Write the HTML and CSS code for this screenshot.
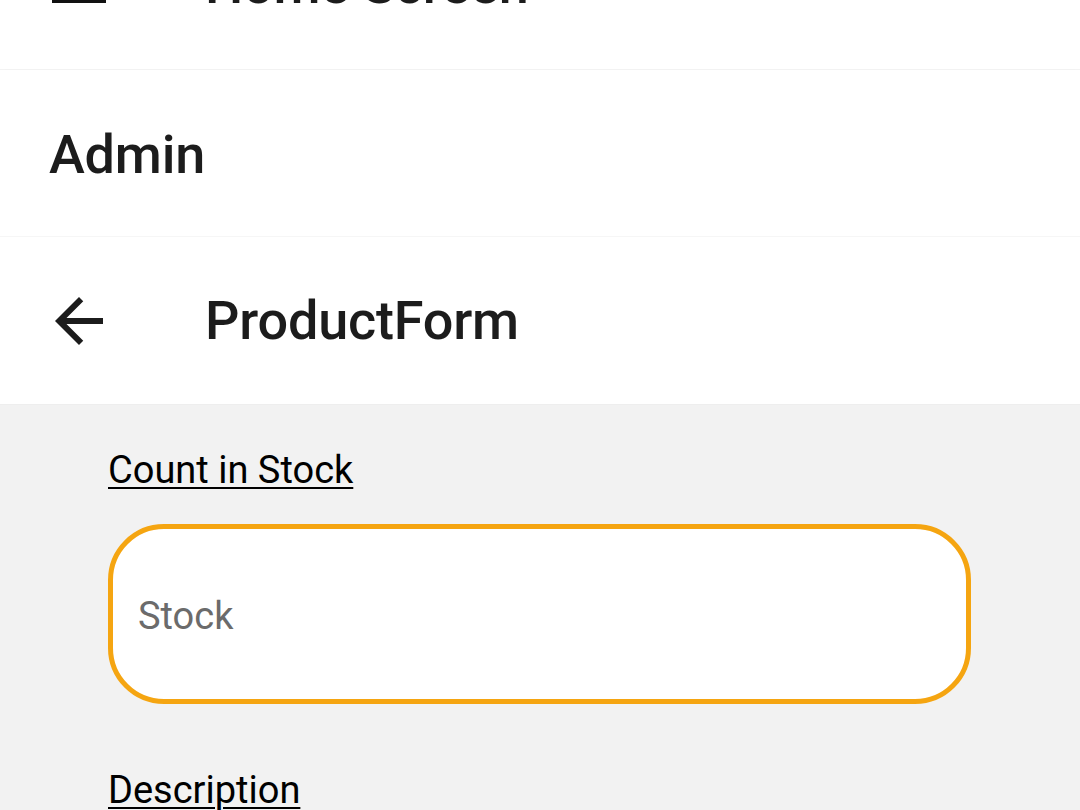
FILE: index.html
```html
<!DOCTYPE html>
<html>
<head>
<meta charset="utf-8">
<link rel="stylesheet" href="styles.css">
</head>
<body>
<div class="screen">
  <header class="bar bar-home">
    <span class="icon-slot">
      <svg class="icon" viewBox="0 0 24 24" width="72" height="72"><path d="M3 18h18v-2H3v2zm0-5h18v-2H3v2zm0-7v2h18V6H3z" fill="#111"/></svg>
    </span>
    <span class="title">Home Screen</span>
  </header>
  <header class="bar bar-admin">
    <span class="title admin">Admin</span>
  </header>
  <header class="bar bar-form">
    <span class="icon-slot">
      <svg class="icon" viewBox="0 0 24 24" width="72" height="72"><path d="M20 11H7.83l5.59-5.59L12 4l-8 8 8 8 1.41-1.41L7.83 13H20v-2z" fill="#1c1c1c"/></svg>
    </span>
    <span class="title">ProductForm</span>
  </header>
  <main class="form">
    <label class="field-label">Count in Stock</label>
    <div class="input">
      <span class="placeholder">Stock</span>
    </div>
    <label class="field-label desc">Description</label>
  </main>
</div>
</body>
</html>
```
FILE: styles.css
```css
html, body {
  margin: 0;
  padding: 0;
}
body {
  width: 1080px;
  height: 810px;
  overflow: hidden;
  background: #f2f2f2;
  font-family: Roboto, "Noto Sans", sans-serif;
}
.screen {
  display: flex;
  flex-direction: column;
}
.bar {
  background: #fff;
  display: flex;
  align-items: center;
  flex-shrink: 0;
  color: #1c1c1c;
}
.bar-home {
  height: 168px;
  margin-top: -99px;
  border-bottom: 1px solid #f3f3f3;
  box-shadow: 0 2px 6px rgba(0,0,0,0.025);
}
.bar-admin {
  height: 166px;
  border-bottom: 1px solid #f6f6f6;
  box-shadow: 0 2px 6px rgba(0,0,0,0.02);
}
.bar-form {
  height: 167px;
}
.icon-slot {
  width: 205px;
  padding-left: 43px;
  box-sizing: border-box;
  display: flex;
  align-items: center;
}
.icon {
  display: block;
}
.title {
  font-size: 54px;
  font-weight: 500;
  line-height: 64px;
  letter-spacing: -0.2px;
}
.admin {
  padding-left: 49px;
  padding-top: 4px;
}
.form {
  display: flex;
  flex-direction: column;
  padding: 43px 109px 0 108px;
  border-top: 1px solid #eeeeee;
}
.field-label {
  font-size: 38px;
  line-height: 45px;
  color: #000;
  text-decoration: underline;
  text-decoration-thickness: 2px;
  text-underline-offset: 4px;
  align-self: flex-start;
}
.input {
  margin-top: 31px;
  height: 180px;
  box-sizing: border-box;
  border: 5px solid #f5a511;
  border-radius: 56px;
  background: #fff;
  display: flex;
  align-items: center;
  padding: 4px 0 0 25px;
}
.placeholder {
  font-size: 38px;
  line-height: 45px;
  color: #6b6b6b;
}
.desc {
  margin-top: 64px;
}
```
